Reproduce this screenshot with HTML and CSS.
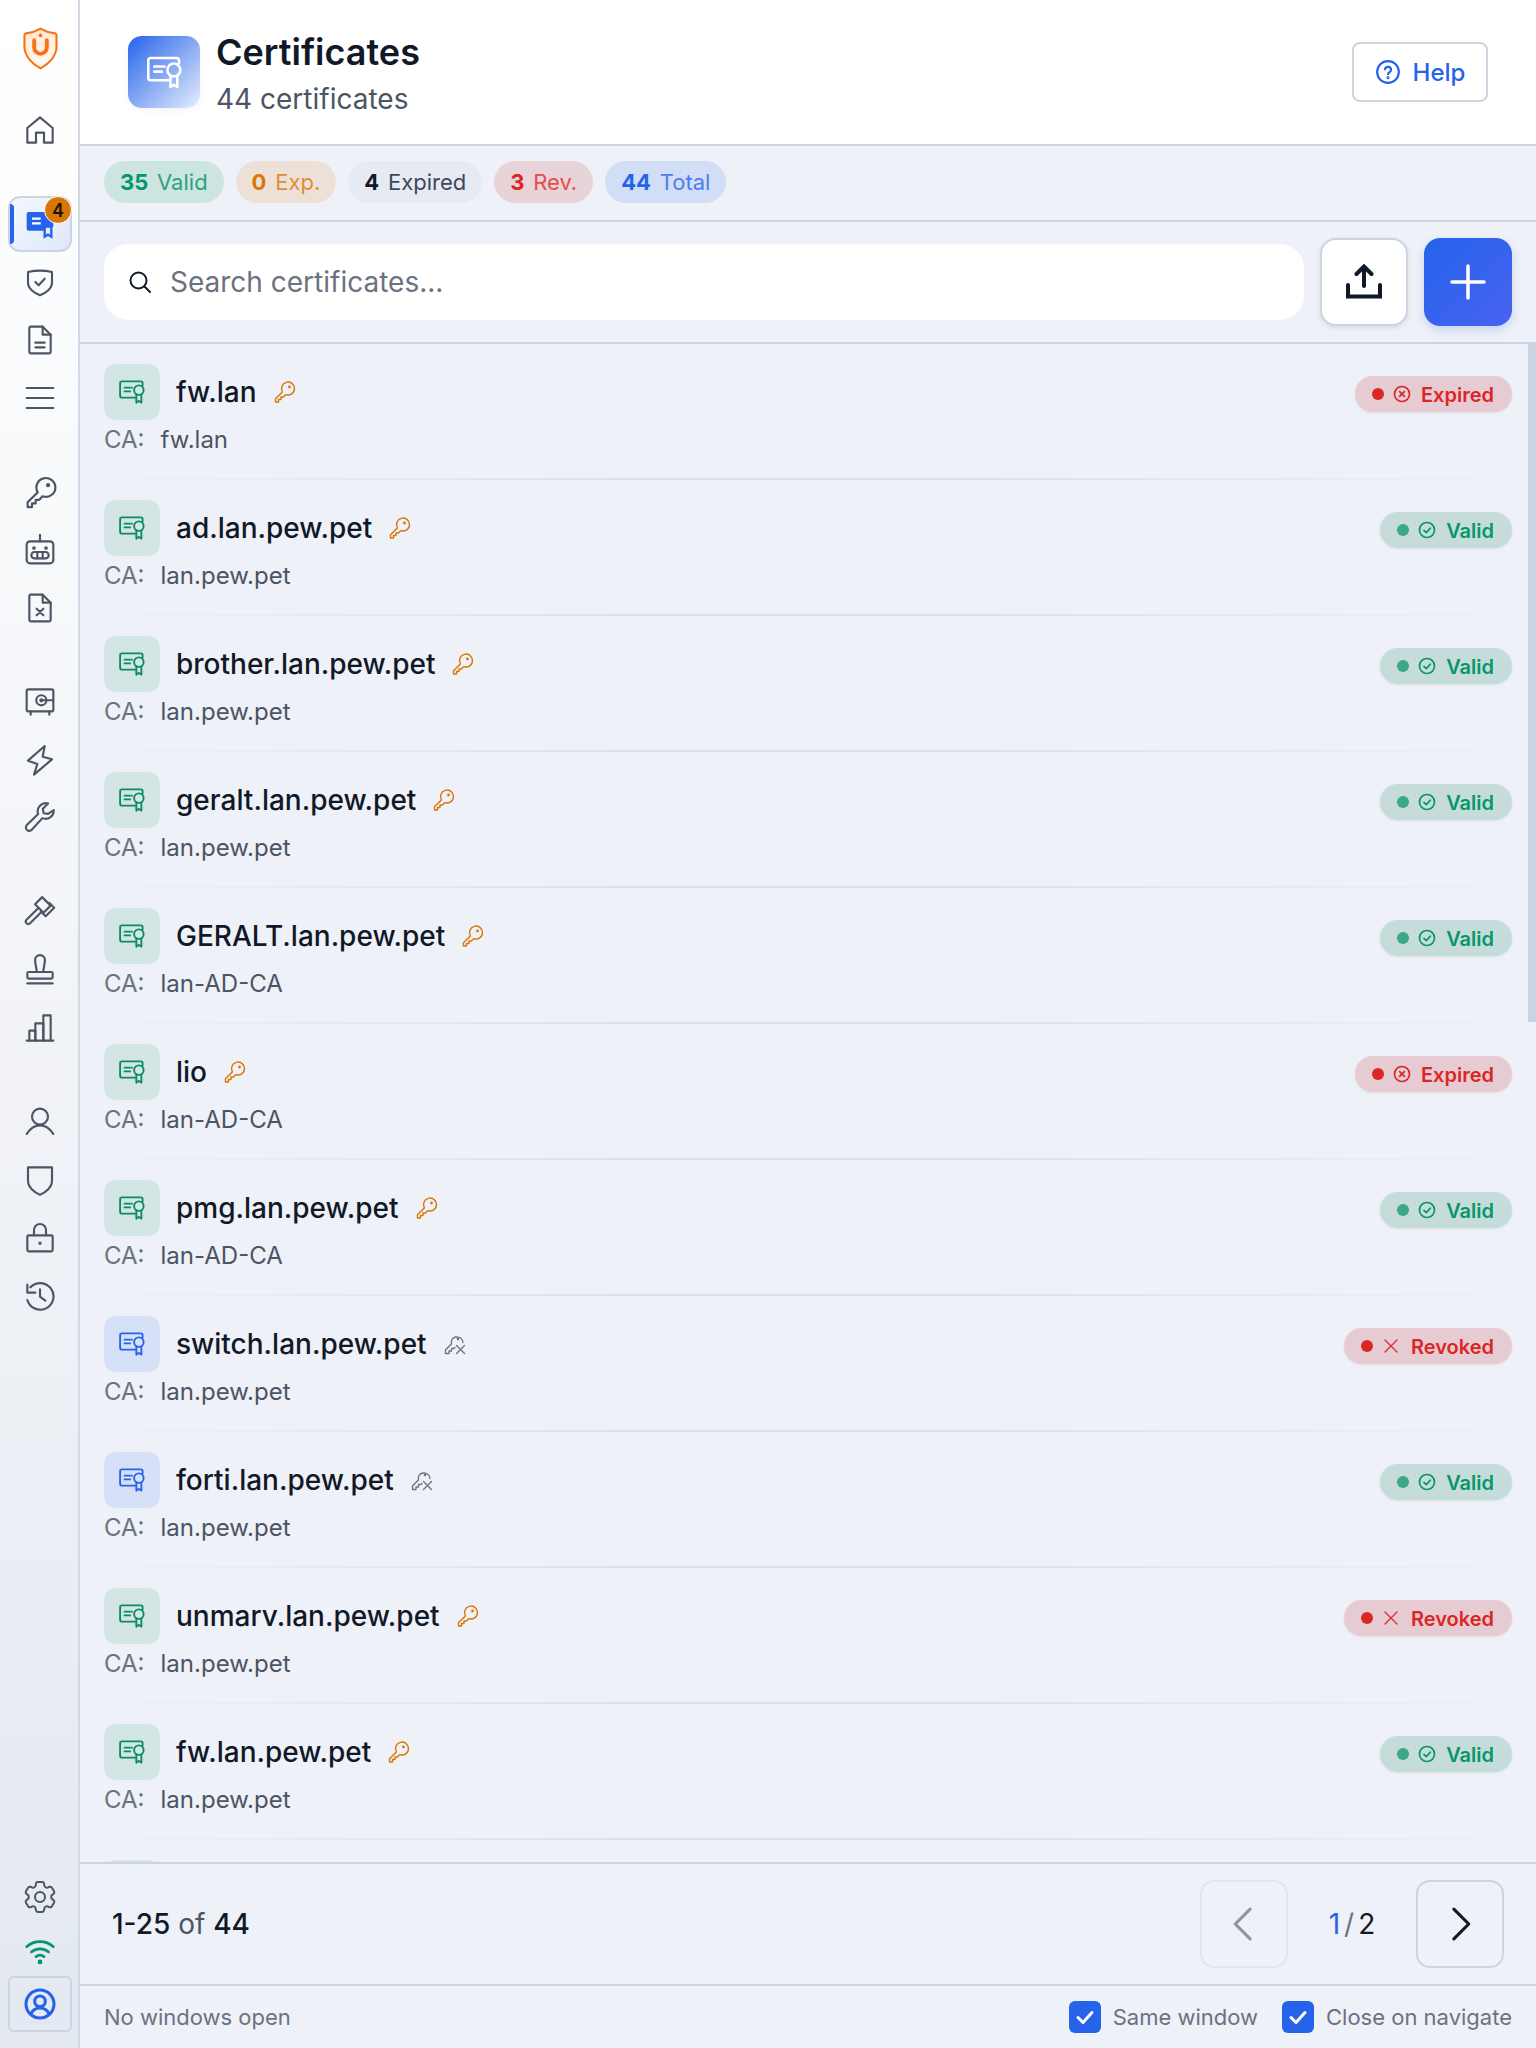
FILE: index.html
```html
<!DOCTYPE html>
<html lang="en">
<head>
<meta charset="utf-8">
<title>Certificates</title>
<link rel="stylesheet" href="styles.css">
</head>
<body>
<svg class="defs" width="0" height="0" aria-hidden="true">
  <defs>
    <linearGradient id="logoFill" x1="0" y1="0" x2="0" y2="1"><stop offset="0" stop-color="#ffe9d2"/><stop offset="1" stop-color="#fffaf5"/></linearGradient>
    <symbol id="i-cert" viewBox="0 0 24 24"><path d="M14.500 16.500H4A1.500 1.500 0 0 1 2.500 15V5A1.500 1.500 0 0 1 4 3.500h15A1.500 1.500 0 0 1 20.500 5v1.500"/><path d="M6 8.500h6M6 11.500h4.500"/><circle cx="17.500" cy="10.500" r="3.800"/><path d="M15.500 14v6.500l2-1.300 2 1.300V14"/></symbol>
    <symbol id="i-key" viewBox="0 0 24 24"><path d="M21.500 8.500a6.500 6.500 0 0 1-8.800 6.100L10.500 17H8v2.500H5.500V22h-3v-3.300l6.900-6.800a6.500 6.500 0 1 1 12.100-3.400z"/><circle cx="16.500" cy="7" r=".7" class="dot"/></symbol>
    <symbol id="i-key-off" viewBox="0 0 24 24"><path d="M20 10.500a6 6 0 0 0-11.500-1.800c-.3 1-.2 2 .1 3L2.500 18v3.500H6V19h2.500v-2.500H11l1-1"/><circle cx="15" cy="7" r=".7" class="dot"/><path d="M13.500 13.500l8 8M21.500 13.500l-8 8"/></symbol>
    <symbol id="i-ok" viewBox="0 0 24 24"><circle cx="12" cy="12" r="10"/><path d="M8 12.500l3 3 5.500-6"/></symbol>
    <symbol id="i-bad" viewBox="0 0 24 24"><circle cx="12" cy="12" r="10"/><path d="M8.800 8.800l6.400 6.400M15.200 8.800l-6.400 6.400"/></symbol>
    <symbol id="i-x" viewBox="0 0 24 24"><path d="M3 3l18 18M21 3L3 21"/></symbol>
  </defs>
</svg>
<div class="app">
  <aside class="sidebar">
    <div class="logo">
      <svg viewBox="0 0 36 44" class="logo-svg"><path d="M18 1.500C24 5 28 6 33 6.500Q34.500 6.700 34.500 8.500V20C34.500 30 26 38 18 42.500 10 38 1.500 30 1.500 20V8.500Q1.500 6.700 3 6.500C8 6 12 5 18 1.500z" fill="url(#logoFill)" stroke="#f97316" stroke-width="2.200" stroke-linejoin="round"/><path d="M11.500 13.500v7.500a6.500 6.500 0 0 0 13 0v-7.500" fill="none" stroke="#f97316" stroke-width="4" stroke-linecap="round"/><circle cx="18" cy="8.500" r="1.900" fill="#f97316"/></svg>
    </div>
    <nav class="nav-group">
      <a class="nav-item"><svg viewBox="0 0 24 24" class="ico"><path d="M2.500 21.500V10.500L12 2.500l9.500 8v11H15v-7.500H9v7.500z"/></svg></a>
    </nav>
    <nav class="nav-group">
      <a class="nav-item active">
        <span class="active-bar"></span>
        <svg viewBox="0 0 24 24" class="ico-active"><path d="M3.500 3h17A1.500 1.500 0 0 1 22 4.500V14h-7v3H3.500A1.500 1.500 0 0 1 2 15.500v-11A1.500 1.500 0 0 1 3.500 3z" fill="#2563eb"/><path d="M6 8h6.500M6 11.500h6.500" stroke="#fff" stroke-width="1.800" fill="none"/><path d="M15.500 14v7.500l2.500-1.500 2.500 1.500V14z" fill="none" stroke="#2563eb" stroke-width="1.800"/></svg>
        <span class="nav-badge">4</span>
      </a>
      <a class="nav-item"><svg viewBox="0 0 24 24" class="ico"><path d="M3 4.500Q12 2.500 21 4.500V12.500C21 17 16 20.500 12 22 8 20.500 3 17 3 12.500z"/><path d="M8.500 12l2.500 2.500 4.500-5"/></svg></a>
      <a class="nav-item"><svg viewBox="0 0 24 24" class="ico"><path d="M14 2H5a1 1 0 0 0-1 1v18a1 1 0 0 0 1 1h14a1 1 0 0 0 1-1V8z"/><path d="M14 2v6h6"/><path d="M8.500 14h7M8.500 17.500h7"/></svg></a>
      <a class="nav-item"><svg viewBox="0 0 24 24" class="ico"><path d="M2 4.500h20M2 12h20M2 19.500h20"/></svg></a>
    </nav>
    <nav class="nav-group">
      <a class="nav-item"><svg viewBox="0 0 24 24" class="ico ico-lg"><use href="#i-key"/></svg></a>
      <a class="nav-item"><svg viewBox="0 0 24 24" class="ico"><rect x="2" y="5.500" width="20" height="16.500" rx="2.500"/><path d="M12 .5v5"/><circle cx="7.500" cy="10.500" r=".6"/><circle cx="16.500" cy="10.500" r=".6"/><rect x="5.500" y="13.500" width="13" height="4.800" rx="2.400"/><path d="M10 13.500v4.800M14 13.500v4.800"/></svg></a>
      <a class="nav-item"><svg viewBox="0 0 24 24" class="ico"><path d="M14 2H5a1 1 0 0 0-1 1v18a1 1 0 0 0 1 1h14a1 1 0 0 0 1-1V8z"/><path d="M14 2v6h6"/><path d="M9.500 12.500l5 5M14.500 12.500l-5 5"/></svg></a>
    </nav>
    <nav class="nav-group">
      <a class="nav-item"><svg viewBox="0 0 24 24" class="ico"><rect x="2" y="2.500" width="20" height="16.500" rx="1.200"/><path d="M5 19v2.500M19 19v2.500"/><circle cx="13" cy="10.700" r="3.800"/><circle cx="13" cy="10.700" r=".8"/><path d="M13 10.700h9"/></svg></a>
      <a class="nav-item"><svg viewBox="0 0 24 24" class="ico"><path d="M15.500 1.500L3 12.500l7 2.500-2.500 8L21 11.500l-7-2z"/></svg></a>
      <a class="nav-item"><svg viewBox="0 0 24 24" class="ico ico-md"><path d="M21.700 6.500a5.800 5.800 0 0 1-8 5.600L6.200 20.300a2.400 2.400 0 0 1-3.500-3.300l8-7.800a5.800 5.800 0 0 1 7-7.500l-3.700 3.700.5 3.200 3.200.5z"/></svg></a>
    </nav>
    <nav class="nav-group">
      <a class="nav-item"><svg viewBox="0 0 24 24" class="ico ico-md"><path d="M13.500 1.500L8.500 6.500l6 6 5-5z"/><path d="M18.500 5.500l3.500 3.500-6 6-3.500-3.500"/><path d="M10.500 9.500L2.500 17.500a1.700 1.700 0 0 0 2.500 2.500l8-8"/></svg></a>
      <a class="nav-item"><svg viewBox="0 0 24 24" class="ico"><path d="M9.500 13.500C9.500 10 8.300 7.500 8.300 4.500a3.700 3.700 0 0 1 7.400 0c0 3-1.200 5.500-1.200 9"/><rect x="2.500" y="13.500" width="19" height="5" rx="1"/><path d="M2.500 22h19"/></svg></a>
      <a class="nav-item"><svg viewBox="0 0 24 24" class="ico"><path d="M2 21.500h20"/><path d="M4 21.500V14h4.500v7.500"/><path d="M8.500 21.500V8.500h6v13"/><path d="M14.500 21.500V2.500H20v19"/></svg></a>
    </nav>
    <nav class="nav-group">
      <a class="nav-item"><svg viewBox="0 0 24 24" class="ico"><circle cx="12" cy="8" r="6"/><path d="M2 21c2.500-4 6-6.500 10-6.500S19.500 17 22 21"/></svg></a>
      <a class="nav-item"><svg viewBox="0 0 24 24" class="ico"><path d="M3 2.500h18v10C21 17.500 16 21.500 12 23 8 21.500 3 17.500 3 12.500z"/></svg></a>
      <a class="nav-item"><svg viewBox="0 0 24 24" class="ico"><rect x="2.500" y="10" width="19" height="12" rx="1"/><path d="M7.500 10V6a4.500 4.500 0 0 1 9 0V10"/><circle cx="12" cy="16" r=".5"/></svg></a>
      <a class="nav-item"><svg viewBox="0 0 24 24" class="ico"><path d="M4.800 5.500A10 10 0 1 1 2.500 15"/><path d="M2.500 3.500v6h6"/><path d="M12 7v5.500l4 3"/></svg></a>
    </nav>
    <div class="side-bottom">
      <a class="side-tool"><svg viewBox="0 0 24 24" class="ico ico-gear"><path d="M9.594 3.940c.09-.542.56-.94 1.110-.94h2.593c.55 0 1.020.398 1.110.94l.213 1.281c.063.374.313.686.645.870.074.040.147.083.22.127.324.196.72.257 1.075.124l1.217-.456a1.125 1.125 0 0 1 1.370.490l1.296 2.247a1.125 1.125 0 0 1-.26 1.431l-1.003.827c-.293.240-.438.613-.431.992a6.759 6.759 0 0 1 0 .255c-.007.378.138.750.43.990l1.005.828c.424.350.534.954.26 1.430l-1.298 2.247a1.125 1.125 0 0 1-1.369.491l-1.217-.456c-.355-.133-.75-.072-1.076.124a6.570 6.570 0 0 1-.22.128c-.331.183-.581.495-.644.869l-.213 1.280c-.09.543-.56.941-1.110.941h-2.594c-.55 0-1.020-.398-1.110-.94l-.213-1.281c-.062-.374-.312-.686-.644-.870a6.520 6.520 0 0 1-.22-.127c-.325-.196-.72-.257-1.076-.124l-1.217.456a1.125 1.125 0 0 1-1.369-.490l-1.297-2.247a1.125 1.125 0 0 1 .26-1.431l1.004-.827c.292-.24.437-.613.43-.992a6.932 6.932 0 0 1 0-.255c.007-.378-.138-.75-.43-.990l-1.004-.828a1.125 1.125 0 0 1-.26-1.430l1.297-2.247a1.125 1.125 0 0 1 1.370-.491l1.216.456c.356.133.751.072 1.076-.124.072-.044.146-.087.22-.128.332-.183.582-.495.644-.869z"/><path d="M15 12a3 3 0 1 1-6 0 3 3 0 0 1 6 0z"/></svg></a>
      <a class="side-tool"><svg viewBox="0 0 24 24" class="ico ico-wifi"><path d="M2 9.500a15 15 0 0 1 20 0M5.500 13.500a10 10 0 0 1 13 0M9 17a5 5 0 0 1 6 0"/><circle cx="12" cy="21" r=".8"/></svg></a>
      <a class="side-user"><svg viewBox="0 0 24 24" class="ico ico-user"><circle cx="12" cy="12" r="10.500"/><circle cx="12" cy="10" r="4"/><path d="M5 19.500c1.500-3 4-4.500 7-4.500s5.500 1.500 7 4.500"/></svg></a>
    </div>
  </aside>

  <main class="main">
    <header class="page-head">
      <div class="head-left">
        <div class="head-icon"><svg viewBox="0 0 24 24" class="head-cert"><use href="#i-cert"/></svg></div>
        <div class="head-text">
          <h1 class="head-title">Certificates</h1>
          <p class="head-sub">44 certificates</p>
        </div>
      </div>
      <button class="help-btn"><svg viewBox="0 0 24 24" class="help-ico"><circle cx="12" cy="12" r="10"/><path d="M9.200 9.500a2.900 2.900 0 0 1 5.700.5c0 2-2.900 2.300-2.900 4"/><circle cx="12" cy="17.300" r=".5"/></svg>Help</button>
    </header>

    <section class="chips">
      <span class="chip chip-green"><b>35</b> Valid</span>
      <span class="chip chip-amber"><b>0</b> Exp.</span>
      <span class="chip chip-grey"><b>4</b> Expired</span>
      <span class="chip chip-red"><b>3</b> Rev.</span>
      <span class="chip chip-blue"><b>44</b> Total</span>
    </section>

    <section class="toolbar">
      <label class="search">
        <svg viewBox="0 0 24 24" class="search-ico"><circle cx="10.500" cy="10.500" r="8"/><path d="M16.500 16.500L22 22"/></svg>
        <input class="search-input" type="text" placeholder="Search certificates...">
      </label>
      <button class="tool-btn tool-upload"><svg viewBox="0 0 36 36" class="upload-ico"><path d="M18 22V3M10.500 10L18 2.500 25.500 10M2 21v11.500h32V21"/></svg></button>
      <button class="tool-btn tool-add"><svg viewBox="0 0 36 36" class="add-ico"><path d="M18 2v32M2 18h32"/></svg></button>
    </section>

    <section class="list-wrap">
      <div class="list">
        <article class="row">
          <div class="row-main">
            <div class="row-top"><span class="cert-box teal"><svg class="cert-ico"><use href="#i-cert"/></svg></span><span class="name">fw.lan</span><svg class="key-ico key-on"><use href="#i-key"/></svg></div>
            <div class="ca"><span class="ca-label">CA:</span><span class="ca-value">fw.lan</span></div>
          </div>
          <span class="status st-red"><i class="st-dot"></i><svg class="st-ico"><use href="#i-bad"/></svg>Expired</span>
        </article>
        <article class="row">
          <div class="row-main">
            <div class="row-top"><span class="cert-box teal"><svg class="cert-ico"><use href="#i-cert"/></svg></span><span class="name">ad.lan.pew.pet</span><svg class="key-ico key-on"><use href="#i-key"/></svg></div>
            <div class="ca"><span class="ca-label">CA:</span><span class="ca-value">lan.pew.pet</span></div>
          </div>
          <span class="status st-green"><i class="st-dot"></i><svg class="st-ico"><use href="#i-ok"/></svg>Valid</span>
        </article>
        <article class="row">
          <div class="row-main">
            <div class="row-top"><span class="cert-box teal"><svg class="cert-ico"><use href="#i-cert"/></svg></span><span class="name">brother.lan.pew.pet</span><svg class="key-ico key-on"><use href="#i-key"/></svg></div>
            <div class="ca"><span class="ca-label">CA:</span><span class="ca-value">lan.pew.pet</span></div>
          </div>
          <span class="status st-green"><i class="st-dot"></i><svg class="st-ico"><use href="#i-ok"/></svg>Valid</span>
        </article>
        <article class="row">
          <div class="row-main">
            <div class="row-top"><span class="cert-box teal"><svg class="cert-ico"><use href="#i-cert"/></svg></span><span class="name">geralt.lan.pew.pet</span><svg class="key-ico key-on"><use href="#i-key"/></svg></div>
            <div class="ca"><span class="ca-label">CA:</span><span class="ca-value">lan.pew.pet</span></div>
          </div>
          <span class="status st-green"><i class="st-dot"></i><svg class="st-ico"><use href="#i-ok"/></svg>Valid</span>
        </article>
        <article class="row">
          <div class="row-main">
            <div class="row-top"><span class="cert-box teal"><svg class="cert-ico"><use href="#i-cert"/></svg></span><span class="name">GERALT.lan.pew.pet</span><svg class="key-ico key-on"><use href="#i-key"/></svg></div>
            <div class="ca"><span class="ca-label">CA:</span><span class="ca-value">lan-AD-CA</span></div>
          </div>
          <span class="status st-green"><i class="st-dot"></i><svg class="st-ico"><use href="#i-ok"/></svg>Valid</span>
        </article>
        <article class="row">
          <div class="row-main">
            <div class="row-top"><span class="cert-box teal"><svg class="cert-ico"><use href="#i-cert"/></svg></span><span class="name">lio</span><svg class="key-ico key-on"><use href="#i-key"/></svg></div>
            <div class="ca"><span class="ca-label">CA:</span><span class="ca-value">lan-AD-CA</span></div>
          </div>
          <span class="status st-red"><i class="st-dot"></i><svg class="st-ico"><use href="#i-bad"/></svg>Expired</span>
        </article>
        <article class="row">
          <div class="row-main">
            <div class="row-top"><span class="cert-box teal"><svg class="cert-ico"><use href="#i-cert"/></svg></span><span class="name">pmg.lan.pew.pet</span><svg class="key-ico key-on"><use href="#i-key"/></svg></div>
            <div class="ca"><span class="ca-label">CA:</span><span class="ca-value">lan-AD-CA</span></div>
          </div>
          <span class="status st-green"><i class="st-dot"></i><svg class="st-ico"><use href="#i-ok"/></svg>Valid</span>
        </article>
        <article class="row">
          <div class="row-main">
            <div class="row-top"><span class="cert-box blue"><svg class="cert-ico"><use href="#i-cert"/></svg></span><span class="name">switch.lan.pew.pet</span><svg class="key-ico key-off"><use href="#i-key-off"/></svg></div>
            <div class="ca"><span class="ca-label">CA:</span><span class="ca-value">lan.pew.pet</span></div>
          </div>
          <span class="status st-red"><i class="st-dot"></i><svg class="st-ico st-ico-x"><use href="#i-x"/></svg>Revoked</span>
        </article>
        <article class="row">
          <div class="row-main">
            <div class="row-top"><span class="cert-box blue"><svg class="cert-ico"><use href="#i-cert"/></svg></span><span class="name">forti.lan.pew.pet</span><svg class="key-ico key-off"><use href="#i-key-off"/></svg></div>
            <div class="ca"><span class="ca-label">CA:</span><span class="ca-value">lan.pew.pet</span></div>
          </div>
          <span class="status st-green"><i class="st-dot"></i><svg class="st-ico"><use href="#i-ok"/></svg>Valid</span>
        </article>
        <article class="row">
          <div class="row-main">
            <div class="row-top"><span class="cert-box teal"><svg class="cert-ico"><use href="#i-cert"/></svg></span><span class="name">unmarv.lan.pew.pet</span><svg class="key-ico key-on"><use href="#i-key"/></svg></div>
            <div class="ca"><span class="ca-label">CA:</span><span class="ca-value">lan.pew.pet</span></div>
          </div>
          <span class="status st-red"><i class="st-dot"></i><svg class="st-ico st-ico-x"><use href="#i-x"/></svg>Revoked</span>
        </article>
        <article class="row">
          <div class="row-main">
            <div class="row-top"><span class="cert-box teal"><svg class="cert-ico"><use href="#i-cert"/></svg></span><span class="name">fw.lan.pew.pet</span><svg class="key-ico key-on"><use href="#i-key"/></svg></div>
            <div class="ca"><span class="ca-label">CA:</span><span class="ca-value">lan.pew.pet</span></div>
          </div>
          <span class="status st-green"><i class="st-dot"></i><svg class="st-ico"><use href="#i-ok"/></svg>Valid</span>
        </article>
        <article class="row">
          <div class="row-main">
            <div class="row-top"><span class="cert-box teal"></span></div>
          </div>
        </article>
      </div>
      <span class="scroll-thumb"></span>
    </section>

    <section class="pager">
      <div class="pager-count"><span class="dark">1-25</span> of <span class="dark">44</span></div>
      <div class="pager-nav">
        <button class="page-btn page-prev"><svg viewBox="0 0 24 24" class="page-ico"><path d="M15.500 3.500L7 12l8.500 8.500"/></svg></button>
        <div class="page-num"><span class="page-cur">1</span><span class="page-sep">/</span><span class="dark">2</span></div>
        <button class="page-btn page-next"><svg viewBox="0 0 24 24" class="page-ico"><path d="M8.500 3.500L17 12l-8.500 8.500"/></svg></button>
      </div>
    </section>

    <footer class="bottom">
      <span class="win-note">No windows open</span>
      <div class="opts">
        <label class="opt"><span class="check"><svg viewBox="0 0 24 24" class="check-ico"><path d="M5 12.500l5 5 9-10"/></svg></span>Same window</label>
        <label class="opt"><span class="check"><svg viewBox="0 0 24 24" class="check-ico"><path d="M5 12.500l5 5 9-10"/></svg></span>Close on navigate</label>
      </div>
    </footer>
  </main>
</div>
</body>
</html>
```
FILE: styles.css
```css
* { box-sizing: border-box; }
html, body { margin: 0; padding: 0; }
body { width: 1536px; height: 2048px; overflow: hidden; font-family: "Inter", "Liberation Sans", sans-serif; color: #111827; background: #eef1f7; }
h1, p { margin: 0; }
button { font-family: inherit; cursor: pointer; }
.defs { position: absolute; }
.dot { fill: currentColor; }

.app { display: flex; width: 1536px; height: 2048px; }

/* sidebar */
.sidebar { width: 80px; height: 2048px; flex: none; display: flex; flex-direction: column; border-right: 2px solid #d0d9e6; background: linear-gradient(180deg, #ffffff 0%, #e4e8f0 100%); }
.logo { height: 102px; padding-top: 27px; display: flex; justify-content: center; align-items: flex-start; margin-right: -2px; }
.logo-svg { width: 35px; height: 43px; }
.nav-group { display: flex; flex-direction: column; gap: 2px; margin-bottom: 38px; }
.nav-item { position: relative; width: 64px; height: 56px; margin-left: 8px; display: flex; align-items: center; justify-content: center; border-radius: 12px; }
.ico { width: 32px; height: 32px; flex: none; fill: none; stroke: #4b5563; stroke-width: 1.600; stroke-linecap: round; stroke-linejoin: round; color: #4b5563; }
.ico-lg { width: 35px; height: 35px; margin-left: 2px; stroke-width: 1.500; }
.ico-md { width: 34px; height: 34px; stroke-width: 1.500; }
.ico circle[r=".6"], .ico circle[r=".5"], .ico circle[r=".8"] { fill: #4b5563; }
.active { background: linear-gradient(135deg, #f4f7fd 0%, #dfe8fb 100%); border: 2px solid #cbd5e1; }
.active-bar { position: absolute; left: 0; top: 6px; bottom: 6px; width: 4px; background: #2563eb; border-radius: 0 4px 4px 0; }
.ico-active { width: 32px; height: 32px; }
.nav-badge { position: absolute; top: -2px; right: -2px; width: 28px; height: 28px; border-radius: 50%; background: #d97706; border: 1.500px solid #fff; color: #1f1300; font-size: 18px; font-weight: 600; display: flex; align-items: center; justify-content: center; }
.side-bottom { margin-top: auto; padding-bottom: 16px; display: flex; flex-direction: column; align-items: center; margin-right: -2px; }
.side-tool { height: 52px; display: flex; align-items: center; justify-content: center; }
.ico-gear { width: 40px; height: 40px; stroke-width: 1.200; margin-top: -2px; }
.ico-wifi { width: 32px; height: 32px; stroke: #059669; stroke-width: 2; }
.ico-wifi circle { fill: #059669; stroke: #059669; }
.side-user { width: 64px; height: 56px; display: flex; align-items: center; justify-content: center; border: 2px solid #cbd5e1; border-radius: 6px; }
.ico-user { width: 32px; height: 32px; stroke: #2563eb; stroke-width: 2.300; }

/* main */
.main { flex: 1; min-width: 0; display: flex; flex-direction: column; height: 2048px; }

.page-head { height: 146px; flex: none; display: flex; align-items: center; justify-content: space-between; background: #fff; border-bottom: 2px solid #cbd5e1; padding: 0 48px; }
.head-left { display: flex; align-items: center; gap: 16px; }
.head-icon { width: 72px; height: 72px; border-radius: 14px; background: linear-gradient(135deg, #2563eb 0%, #e6edfc 100%); display: flex; align-items: center; justify-content: center; box-shadow: 0 2px 6px rgba(30, 64, 175, .06); }
.head-cert { width: 41px; height: 41px; fill: none; stroke: #fff; stroke-width: 1.500; stroke-linecap: round; stroke-linejoin: round; }
.head-text { display: flex; flex-direction: column; gap: 8px; padding-top: 1px; }
.head-title { font-size: 36px; line-height: 44px; font-weight: 600; color: #111827; }
.head-sub { font-size: 28px; line-height: 34px; color: #4b5563; }
.help-btn { width: 136px; height: 60px; display: flex; align-items: center; justify-content: center; gap: 12px; background: #fff; border: 2px solid #cbd5e1; border-radius: 8px; color: #2563eb; font-size: 24px; font-weight: 500; padding: 0; }
.help-ico { width: 26px; height: 26px; fill: none; stroke: #2563eb; stroke-width: 2; stroke-linecap: round; }

.chips { height: 76px; flex: none; display: flex; align-items: center; gap: 12px; padding: 0 24px; border-bottom: 2px solid #cbd5e1; padding-bottom: 2px; background: #eef1f7; }
.chip { height: 42px; border-radius: 21px; padding: 0 16px; display: flex; align-items: center; gap: 8.800px; font-size: 22px; }
.chip b { font-weight: 700; }
.chip-green { background: #cce5e1; color: #2ba37f; }
.chip-green b { color: #059669; }
.chip-amber { background: #ede1d7; color: #de8f35; }
.chip-amber b { color: #d97706; }
.chip-grey { background: #e6eaf3; color: #3e4859; }
.chip-grey b { color: #111827; }
.chip-red { background: #e8d3d9; color: #e44d4d; }
.chip-red b { color: #dc2626; }
.chip-blue { background: #d2ddf6; color: #4a7eef; }
.chip-blue b { color: #2563eb; }

.toolbar { height: 122px; flex: none; display: flex; align-items: center; gap: 16px; padding: 0 24px; border-bottom: 2px solid #cbd5e1; }
.search { width: 1200px; height: 76px; background: #fff; border-radius: 24px; display: flex; align-items: center; gap: 18px; padding: 0 24px; }
.search-ico { width: 24px; height: 24px; flex: none; fill: none; stroke: #111827; stroke-width: 2; stroke-linecap: round; }
.search-input { flex: 1; border: 0; outline: 0; background: none; font-family: inherit; font-size: 28px; color: #111827; padding: 0; height: 40px; }
.search-input::placeholder { color: #6b7280; opacity: 1; }
.tool-btn { width: 88px; height: 88px; border-radius: 16px; display: flex; align-items: center; justify-content: center; padding: 0; flex: none; }
.tool-upload { background: #fff; border: 2px solid #cbd5e1; box-shadow: 0 2px 5px rgba(15, 23, 42, .1); }
.tool-add { background: linear-gradient(135deg, #2563eb 0%, #4862f0 100%); border: 0; box-shadow: 0 4px 10px rgba(37, 99, 235, .2); }
.upload-ico { width: 36px; height: 36px; fill: none; stroke: #111827; stroke-width: 4; stroke-linecap: round; stroke-linejoin: miter; }
.add-ico { width: 36px; height: 36px; fill: none; stroke: #fff; stroke-width: 3.500; stroke-linecap: round; }

.list-wrap { position: relative; height: 1518px; flex: none; overflow: hidden; }
.list { height: 1518px; overflow: hidden; }
.scroll-thumb { position: absolute; top: 0; right: 0; width: 8px; height: 678px; background: #c9d3e1; }

.row { height: 136px; padding: 20px 24px 0; display: flex; justify-content: space-between; align-items: flex-start; border-bottom: 2px solid transparent; border-image: linear-gradient(90deg, rgba(203, 213, 225, 0) 0%, rgba(203, 213, 225, .6) 40%, rgba(203, 213, 225, .6) 60%, rgba(203, 213, 225, 0) 100%) 1; }
.row-top { display: flex; align-items: center; }
.cert-box { width: 56px; height: 56px; border-radius: 12px; display: flex; align-items: center; justify-content: center; flex: none; }
.cert-box.teal { background: #d3e6e5; color: #0b8a63; }
.cert-box.blue { background: #d6e1f7; color: #2563eb; }
.cert-ico { width: 30px; height: 30px; fill: none; stroke: currentColor; stroke-width: 1.500; stroke-linecap: round; stroke-linejoin: round; }
.name { margin-left: 16px; font-size: 28px; font-weight: 500; color: #111827; line-height: 34px; }
.key-ico { width: 24px; height: 24px; margin-left: 16px; fill: none; stroke-width: 1.400; stroke-linecap: round; stroke-linejoin: round; }
.key-on { stroke: #d97706; color: #d97706; }
.key-off { stroke: #6b7280; color: #6b7280; stroke-width: 1.300; }
.ca { margin-top: 4px; font-size: 24px; line-height: 32px; color: #6b7280; display: flex; gap: 16px; }
.ca-value { color: #4b5563; }

.status { height: 36px; margin-top: 12px; border-radius: 18px; padding: 1px 18px 0 17px; display: flex; align-items: center; font-size: 20px; font-weight: 600; box-shadow: 0 1px 3px rgba(15, 23, 42, .08); }
.st-dot { width: 12px; height: 12px; border-radius: 50%; flex: none; margin-right: 9px; margin-top: -1px; }
.st-ico { width: 18px; height: 18px; flex: none; margin-right: 10px; margin-top: -1px; fill: none; stroke: currentColor; stroke-width: 2.200; stroke-linecap: round; stroke-linejoin: round; }
.st-ico-x { width: 16px; height: 16px; stroke-width: 1.800; margin-right: 12px; margin-left: 1px; }
.st-green { background: #c5dcdb; color: #059669; }
.st-green .st-dot { background: #3ba886; }
.st-red { background: #e6cbd2; color: #dc2626; }
.st-red .st-dot { background: #dc2626; }

.pager { height: 124px; flex: none; display: flex; align-items: center; justify-content: space-between; padding: 0 32px; border-top: 2px solid #cbd5e1; border-bottom: 2px solid #cbd5e1; }
.pager-count { font-size: 28px; color: #4b5563; }
.pager-count .dark { font-weight: 450; }
.dark { color: #111827; }
.pager-nav { display: flex; align-items: center; }
.page-btn { width: 88px; height: 88px; background: none; border: 2px solid #cbd5e1; border-radius: 14px; display: flex; align-items: center; justify-content: center; padding: 0; }
.page-prev { border-color: #e0e6ee; }
.page-ico { width: 42px; height: 42px; fill: none; stroke: #111827; stroke-width: 1.800; stroke-linecap: round; stroke-linejoin: round; }
.page-prev .page-ico { stroke: #8f94a0; }
.page-num { width: 128px; text-align: center; font-size: 28px; display: flex; justify-content: center; gap: 4px; }
.page-cur { color: #2563eb; }
.page-sep { color: #6b7280; }

.bottom { flex: 1; display: flex; align-items: center; justify-content: space-between; padding: 0 24px; font-size: 22px; color: #6b7280; }
.opts { display: flex; gap: 24px; }
.opt { display: flex; align-items: center; gap: 12px; }
.check { width: 32px; height: 32px; border-radius: 6px; background: #2563eb; display: flex; align-items: center; justify-content: center; }
.check-ico { width: 24px; height: 24px; fill: none; stroke: #fff; stroke-width: 3; stroke-linecap: round; stroke-linejoin: round; }
```
